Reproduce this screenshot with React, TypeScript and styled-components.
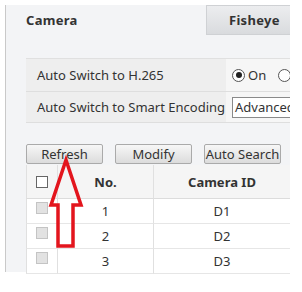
import React from 'react';
import styled, { createGlobalStyle } from 'styled-components';

const GlobalStyle = createGlobalStyle`
  html, body {
    margin: 0;
    padding: 0;
    background: #ffffff;
  }
  body {
    font-family: "Noto Sans", "Liberation Sans", sans-serif;
    font-size: 13px;
    color: #333333;
  }
`;

const Frame = styled.div`
  position: relative;
  width: 302px;
  height: 292px;
  overflow: hidden;
  padding: 5px 0 0 5px;
  box-sizing: border-box;
`;

const Panel = styled.div`
  width: 285px;
  height: 267px;
  box-sizing: border-box;
  border-left: 1px solid #c9c9c9;
  background: #f3f4f6;
  display: flex;
  flex-direction: column;
`;

const TabBar = styled.div`
  display: flex;
  height: 30px;
  flex-shrink: 0;
`;

const Tab = styled.div<{ $active?: boolean }>`
  box-sizing: border-box;
  height: 30px;
  display: flex;
  align-items: center;
  font-weight: 700;
  font-size: 13px;
  letter-spacing: 0.3px;
  color: #333;
  width: ${({ $active }) => ($active ? '200px' : '84px')};
  padding-left: ${({ $active }) => ($active ? '20px' : '22px')};
  background: ${({ $active }) =>
    $active ? 'transparent' : 'linear-gradient(#ecedef, #d9dbde)'};
  border: ${({ $active }) => ($active ? 'none' : '1px solid #cfd1d4')};
  border-right: none;
`;

const Content = styled.div`
  padding: 23px 0 0 20px;
  display: flex;
  flex-direction: column;
`;

const SettingsTable = styled.div`
  border-top: 1px solid #e0e0e0;
  display: grid;
  grid-template-columns: 200px 64px;
`;

const LabelCell = styled.div<{ $h: number }>`
  height: ${({ $h }) => $h}px;
  display: flex;
  align-items: center;
  padding-left: 11px;
  background: #eeeeee;
  border-bottom: 1px solid #dedede;
  box-sizing: border-box;
  white-space: nowrap;
`;

const ValueCell = styled.div<{ $h: number }>`
  height: ${({ $h }) => $h}px;
  display: flex;
  align-items: center;
  padding-left: 6px;
  background: #f6f6f6;
  border-bottom: 1px solid #dedede;
  box-sizing: border-box;
  white-space: nowrap;
  overflow: hidden;
`;

const Radio = styled.span<{ $checked?: boolean }>`
  width: 11px;
  height: 11px;
  border: 1px solid #555;
  border-radius: 50%;
  background: #fff;
  display: inline-flex;
  align-items: center;
  justify-content: center;
  flex-shrink: 0;
  &::after {
    content: '';
    width: 6px;
    height: 6px;
    border-radius: 50%;
    background: ${({ $checked }) => ($checked ? '#222' : 'transparent')};
  }
`;

const RadioLabel = styled.span`
  margin: 0 12px 0 3px;
`;

const Select = styled.div`
  height: 21px;
  width: 80px;
  flex-shrink: 0;
  border: 1px solid #8a8a8a;
  background: #fff;
  display: flex;
  align-items: center;
  padding-left: 2px;
  box-sizing: border-box;
`;

const ButtonRow = styled.div`
  display: flex;
  gap: 12px;
  margin-top: 21px;
`;

const Button = styled.div`
  width: 77px;
  height: 20px;
  box-sizing: border-box;
  border: 1px solid #aaaaaa;
  border-radius: 2px;
  background: linear-gradient(#f7f7f7, #dcdcdc);
  display: flex;
  align-items: center;
  justify-content: center;
  font-size: 13px;
  color: #333;
`;

const Grid = styled.div`
  margin-top: 1px;
  display: grid;
  grid-template-columns: 31px 96px 137px;
`;

const Cell = styled.div<{ $head?: boolean; $first?: boolean }>`
  height: ${({ $head }) => ($head ? '34px' : '25px')};
  box-sizing: border-box;
  display: flex;
  align-items: center;
  justify-content: center;
  background: ${({ $head }) => ($head ? '#f5f5f5' : '#ffffff')};
  font-weight: ${({ $head }) => ($head ? 700 : 400)};
  border-bottom: 1px solid ${({ $head }) => ($head ? '#dcdcdc' : '#e6e6e6')};
  border-left: 1px solid #e0e0e0;
  ${({ $first }) => ($first ? 'justify-content: flex-start; padding-left: 9px;' : '')}
`;

const Check = styled.span<{ $disabled?: boolean }>`
  width: 12px;
  height: 12px;
  box-sizing: border-box;
  border: 1px solid ${({ $disabled }) => ($disabled ? '#c4c4c4' : '#666')};
  background: ${({ $disabled }) => ($disabled ? '#e2e2e2' : '#fff')};
  margin-top: ${({ $disabled }) => ($disabled ? '-6px' : '0')};
`;

const Arrow = styled.svg`
  position: absolute;
  left: 0;
  top: 0;
  pointer-events: none;
`;

const rows = [1, 2, 3];

export default function App() {
  return (
    <Frame>
      <GlobalStyle />
      <Panel>
        <TabBar>
          <Tab $active>Camera</Tab>
          <Tab>Fisheye</Tab>
        </TabBar>
        <Content>
          <SettingsTable>
            <LabelCell $h={33}>Auto Switch to H.265</LabelCell>
            <ValueCell $h={33}>
              <Radio $checked />
              <RadioLabel>On</RadioLabel>
              <Radio />
            </ValueCell>
            <LabelCell $h={31}>Auto Switch to Smart Encoding</LabelCell>
            <ValueCell $h={31}>
              <Select>Advanced</Select>
            </ValueCell>
          </SettingsTable>
          <ButtonRow>
            <Button>Refresh</Button>
            <Button>Modify</Button>
            <Button>Auto Search</Button>
          </ButtonRow>
          <Grid>
            <Cell $head $first>
              <Check />
            </Cell>
            <Cell $head>No.</Cell>
            <Cell $head>Camera ID</Cell>
            {rows.map((n) => (
              <React.Fragment key={n}>
                <Cell $first>
                  <Check $disabled />
                </Cell>
                <Cell>{n}</Cell>
                <Cell>D{n}</Cell>
              </React.Fragment>
            ))}
          </Grid>
        </Content>
      </Panel>
      <Arrow width="302" height="292" viewBox="0 0 302 292">
        <polygon
          points="66,160 81,205 73,205 73,246 58,246 58,205 51,205"
          fill="none"
          stroke="#e3151d"
          strokeWidth="3.5"
          strokeLinejoin="miter"
        />
      </Arrow>
    </Frame>
  );
}
